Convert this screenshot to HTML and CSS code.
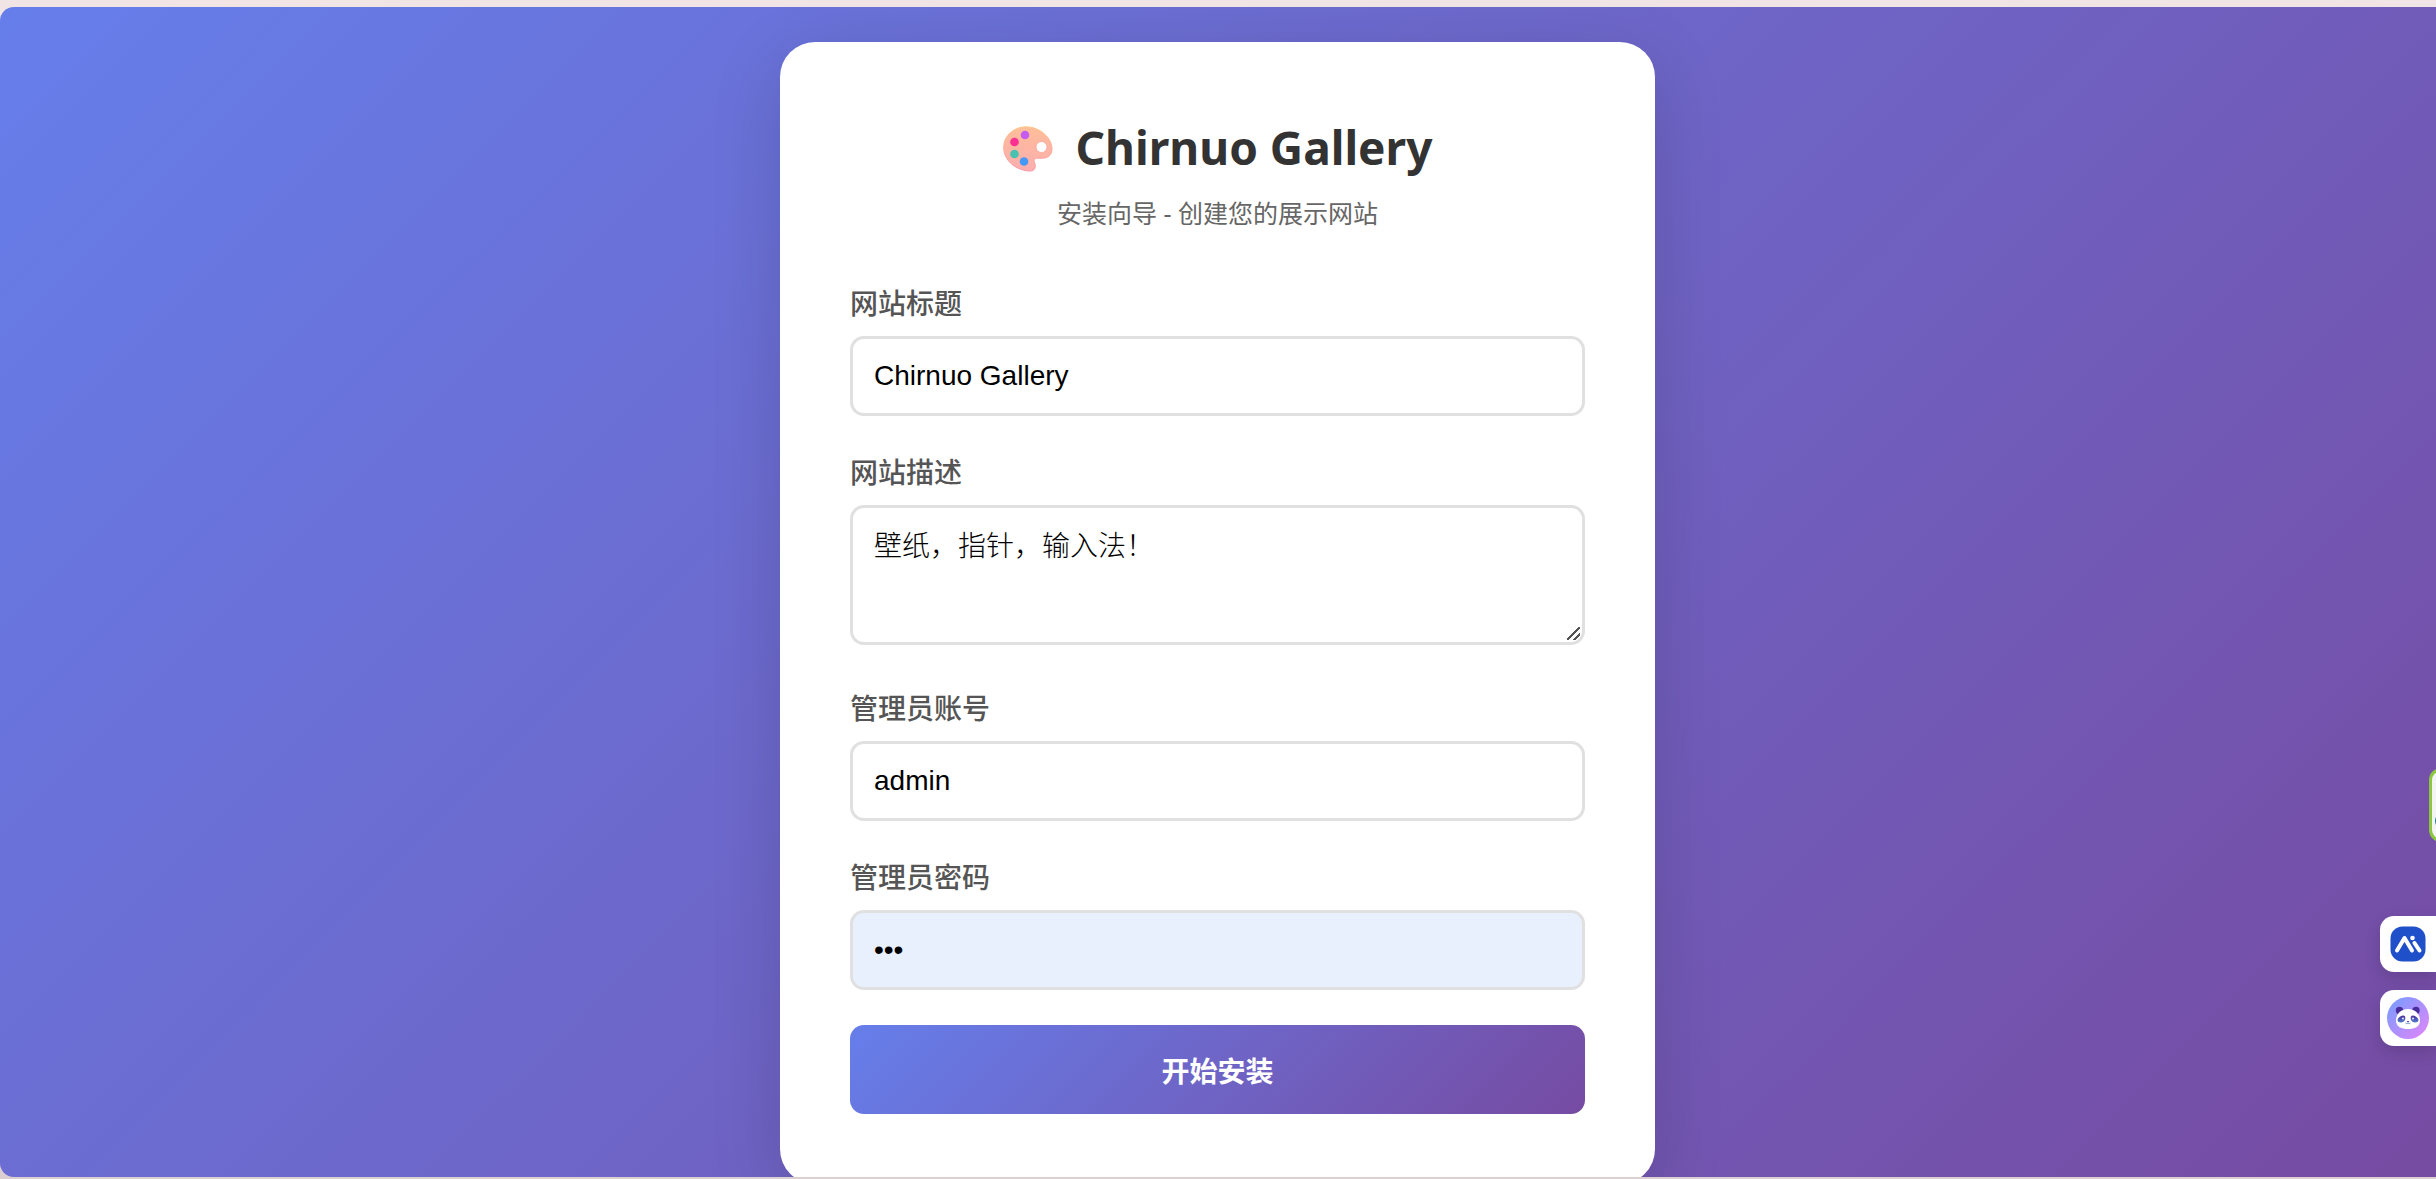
FILE: index.html
```html
<!DOCTYPE html>
<html lang="zh-CN">
<head>
<meta charset="utf-8">
<meta name="viewport" content="width=device-width, initial-scale=1">
<title>Chirnuo Gallery</title>
<link rel="stylesheet" href="styles.css">
</head>
<body>
<main class="viewport">
  <section class="card">
    <header class="header">
      <h1 class="title">
        <svg class="palette" viewBox="0 0 50 46" aria-hidden="true">
          <defs>
            <linearGradient id="pal" x1="0" y1="0" x2="0" y2="1">
              <stop offset="0" stop-color="#ffbf98"/><stop offset=".4" stop-color="#fdb6a2"/><stop offset="1" stop-color="#ffaeae"/>
            </linearGradient>
            <linearGradient id="rim" x1="0" y1="0" x2="0" y2="1">
              <stop offset="0" stop-color="#ffc487"/><stop offset="1" stop-color="#f893a4"/>
            </linearGradient>
          </defs>
          <path fill="url(#pal)" stroke="url(#rim)" d="M23 .8C37 .8 49 12 49 23c0 6-4 9.200-9.500 9.200h-5c-3 0-4 2-3 4.300.8 2 1 3 .6 5-.5 2.500-2.500 3.800-6 3.500C12 44 .7 34 .7 21.500.7 9.500 11 .8 23 .8Z"/>
          <circle cx="38.500" cy="21" r="5.500" fill="#fff" stroke="#fba595" stroke-width=".8"/>
          <circle cx="22" cy="9" r="4.300" fill="#c45cf0"/>
          <circle cx="11.500" cy="16" r="4.300" fill="#fa3092"/>
          <circle cx="11.500" cy="28" r="4.300" fill="#45c2b0"/>
          <circle cx="21" cy="35.500" r="4.300" fill="#4598f5"/>
        </svg>
        <span>Chirnuo Gallery</span>
      </h1>
      <p class="subtitle">安装向导 - 创建您的展示网站</p>
    </header>
    <form class="form">
      <div class="group">
        <label class="label" for="site-title">网站标题</label>
        <input class="field" id="site-title" type="text" value="Chirnuo Gallery">
      </div>
      <div class="group">
        <label class="label" for="site-desc">网站描述</label>
        <textarea class="field area" id="site-desc">壁纸，指针，输入法！</textarea>
      </div>
      <div class="group">
        <label class="label" for="user">管理员账号</label>
        <input class="field" id="user" type="text" value="admin">
      </div>
      <div class="group">
        <label class="label" for="pass">管理员密码</label>
        <input class="field filled" id="pass" type="password" value="123">
      </div>
      <button class="submit" type="button">开始安装</button>
    </form>
  </section>
</main>
<aside class="dock">
  <button class="peek" type="button" aria-label="助手"><span class="peek-dot"></span></button>
  <button class="tab" type="button" aria-label="AI">
    <svg width="36" height="36" viewBox="0 0 36 36" aria-hidden="true">
      <rect x=".5" y=".5" width="35" height="35" rx="12" fill="#1f4fc9"/>
      <g fill="none" stroke="#fff" stroke-width="4" stroke-linecap="round" stroke-linejoin="round">
        <path d="M7 24.500 14.500 12 22 24.500"/><path d="M24.500 17 29.500 24.500"/>
      </g>
      <circle cx="22.500" cy="12" r="2.300" fill="#fff"/>
    </svg>
  </button>
  <button class="tab panda" type="button" aria-label="熊猫助手">
    <svg width="42" height="42" viewBox="0 0 42 42" aria-hidden="true">
      <defs>
        <linearGradient id="pg" x1="0" y1="0" x2="1" y2="1">
          <stop offset=".1" stop-color="#7d9bff"/><stop offset=".9" stop-color="#d987fa"/>
        </linearGradient>
        <linearGradient id="eye" x1="0" y1="0" x2="0" y2="1">
          <stop offset="0" stop-color="#4a2c9c"/><stop offset="1" stop-color="#4f7fd0"/>
        </linearGradient>
      </defs>
      <circle cx="21" cy="21" r="21" fill="url(#pg)"/>
      <circle cx="12.500" cy="13.500" r="3.700" fill="#4a2c9c"/><circle cx="29" cy="13.500" r="3.700" fill="#4a2c9c"/>
      <path fill="#fff" d="M21 12c7 0 12 5 12 11.500S27.500 32 21 32 9 30 9 23.500 14 12 21 12Z"/>
      <path fill="url(#eye)" d="M18 19.500c1.200 2.500-1 6-4 6-2.600 0-3.800-1.300-3.400-2.800.7-2.700 5.800-5.700 7.400-3.200ZM24 19.500c-1.200 2.500 1 6 4 6 2.600 0 3.800-1.300 3.400-2.800-.7-2.700-5.800-5.700-7.400-3.200Z"/>
      <circle cx="16" cy="21.500" r=".9" fill="#fff"/><circle cx="26" cy="21.500" r=".9" fill="#fff"/>
      <path d="M19.500 24h3L21 25.500Z" fill="#4a2c9c"/>
      <path d="M18.500 26q1.300 1.500 2.500 0 1.200 1.500 2.500 0" fill="none" stroke="#4f7fd0" stroke-width=".8"/>
    </svg>
  </button>
</aside>
</body>
</html>
```
FILE: styles.css
```css
* { box-sizing: border-box; }

body {
  margin: 0;
  height: 100vh;
  padding: 7px 0 2px;
  overflow: hidden;
  background: linear-gradient(#f1e4e4 50%, #dccfd2 50%);
  font-family: "Noto Sans", "Noto Sans CJK SC", sans-serif;
}

.viewport {
  height: 100%;
  padding: 35px 36px 35px 35px;
  overflow: hidden;
  border-radius: 14px 0 0 14px;
  background: linear-gradient(135deg, #667eea 0%, #764ba2 100%);
}

.card {
  max-width: 875px;
  margin: 0 auto;
  padding: 70px;
  border-radius: 35px;
  background: #fff;
  box-shadow: 0 18px 70px rgba(0, 0, 0, 0.15);
}

.header {
  margin-bottom: 52px;
  text-align: center;
}

.title {
  display: flex;
  justify-content: center;
  align-items: center;
  gap: 23px;
  margin: 0 0 14px;
  color: #333;
  font-size: 46px;
  line-height: 70px;
}

.palette {
  width: 50px;
  height: 46px;
  margin-top: 4px;
}

.subtitle {
  margin: 0;
  color: #666;
  font-size: 25px;
  line-height: 34px;
}

.group { margin-bottom: 35px; }

.label {
  display: block;
  margin-bottom: 12px;
  color: #555;
  font-size: 28px;
  font-weight: 500;
  line-height: 42px;
}

.field {
  display: block;
  width: 100%;
  height: 80px;
  padding: 21px;
  border: 3px solid #e0e0e0;
  border-radius: 14px;
  background: #fff;
  color: #000;
  font-family: "Liberation Sans", "Noto Sans CJK SC", sans-serif;
  font-size: 28px;
}

.area {
  height: 140px;
  margin-bottom: 42px;
  font-family: "Noto Sans CJK SC", sans-serif;
  font-weight: 300;
  line-height: 30px;
  resize: vertical;
}

.area::-webkit-resizer {
  background:
    linear-gradient(135deg, transparent 45%, #555 45% 54%, transparent 54% 73%, #555 73% 82%, transparent 82%)
    left top / 13px 13px no-repeat;
}

.filled { background: #e8f0fe; }

.submit {
  display: block;
  width: 100%;
  height: 89px;
  border: 0;
  border-radius: 14px;
  background: linear-gradient(135deg, #667eea 0%, #764ba2 100%);
  color: #fff;
  font-family: "Noto Sans CJK SC", sans-serif;
  font-size: 28px;
  font-weight: 700;
}

/* Assistant tabs docked over the right edge of the page */
.dock {
  position: absolute;
  right: 0;
  bottom: 133px;
  display: flex;
  flex-direction: column;
  align-items: flex-end;
  gap: 18px;
}

.peek {
  display: flex;
  align-items: flex-end;
  width: 40px;
  height: 74px;
  margin: 0 -33px 56px 0;
  padding: 0 0 10px 3px;
  border: 3px solid #8cc63f;
  border-radius: 12px;
  background: #f4f4f4;
}

.peek-dot {
  width: 16px;
  height: 16px;
  border-radius: 8px;
  background: #16808a;
}

.tab {
  display: flex;
  align-items: center;
  width: 56px;
  height: 56px;
  padding: 0 0 0 10px;
  border: 0;
  border-radius: 14px 0 0 14px;
  background: #fff;
  box-shadow: 0 6px 16px rgba(0, 0, 0, 0.14);
}

.panda { padding-left: 7px; }
```
